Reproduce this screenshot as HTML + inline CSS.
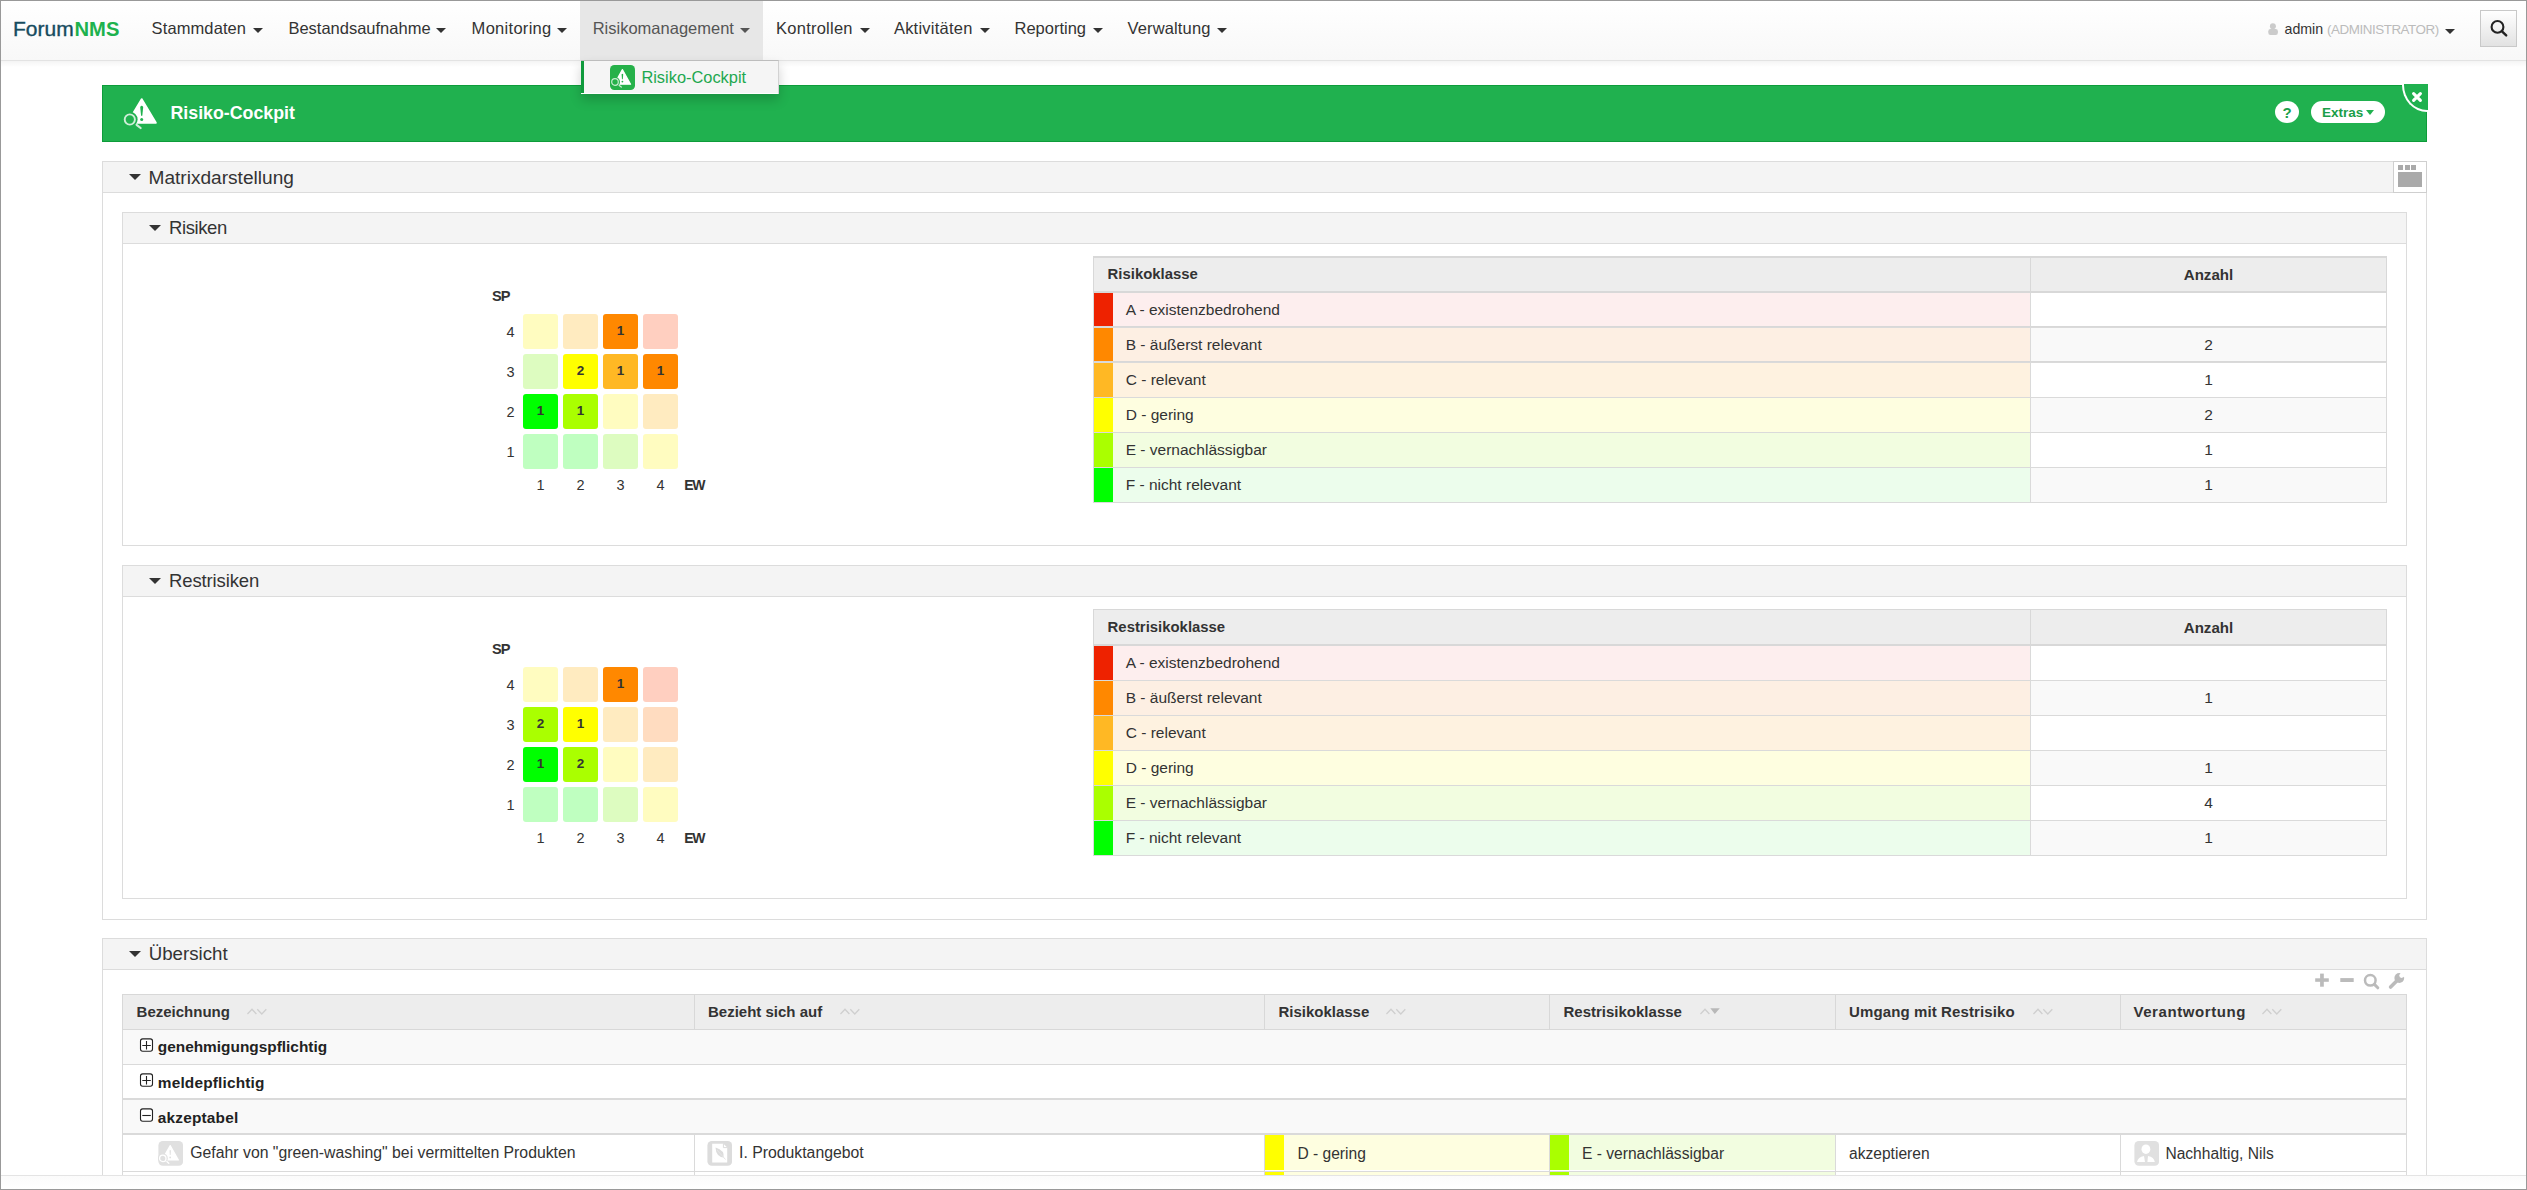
<!DOCTYPE html>
<html><head><meta charset="utf-8"><title>Risiko-Cockpit</title>
<style>
html,body{margin:0;padding:0;}
body{width:2527px;height:1190px;overflow:hidden;position:relative;background:#fff;font-family:"Liberation Sans",sans-serif;}
.a{position:absolute;}
.t{position:absolute;white-space:nowrap;line-height:1;}
</style></head><body>
<div class="a" style="left:1px;top:1px;width:2525px;height:59px;background:linear-gradient(#ffffff,#f8f8f8);"></div>
<div class="a" style="left:1px;top:60px;width:2525px;height:1px;background:#e3e3e3;"></div>
<div class="a" style="left:1px;top:61px;width:2525px;height:6px;background:linear-gradient(rgba(0,0,0,0.045),rgba(0,0,0,0));"></div>
<div class="a" style="left:580px;top:1px;width:183px;height:59px;background:#e7e7e7;"></div>
<div class="t" style="left:13px;top:18.22px;font-size:21px;color:#164b5e;font-weight:400;-webkit-text-stroke:0.35px #164b5e;">Forum</div>
<div class="t" style="left:74.5px;top:18.90px;font-size:20.2px;color:#1eb24e;font-weight:700;">NMS</div>
<div class="t" style="left:151.6px;top:19.83px;font-size:16.5px;color:#333;font-weight:400;letter-spacing:0.1px;">Stammdaten</div>
<div class="a" style="left:253.3px;top:27.5px;width:0;height:0;border-left:5.0px solid transparent;border-right:5.0px solid transparent;border-top:5px solid #333;"></div>
<div class="t" style="left:288.4px;top:19.83px;font-size:16.5px;color:#333;font-weight:400;letter-spacing:0px;">Bestandsaufnahme</div>
<div class="a" style="left:435.6px;top:27.5px;width:0;height:0;border-left:5.0px solid transparent;border-right:5.0px solid transparent;border-top:5px solid #333;"></div>
<div class="t" style="left:471.6px;top:19.83px;font-size:16.5px;color:#333;font-weight:400;letter-spacing:0.29px;">Monitoring</div>
<div class="a" style="left:556.9px;top:27.5px;width:0;height:0;border-left:5.0px solid transparent;border-right:5.0px solid transparent;border-top:5px solid #333;"></div>
<div class="t" style="left:592.7px;top:19.83px;font-size:16.5px;color:#555;font-weight:400;letter-spacing:0px;">Risikomanagement</div>
<div class="a" style="left:739.9px;top:27.5px;width:0;height:0;border-left:5.0px solid transparent;border-right:5.0px solid transparent;border-top:5px solid #555;"></div>
<div class="t" style="left:776.1px;top:19.83px;font-size:16.5px;color:#333;font-weight:400;letter-spacing:0.23px;">Kontrollen</div>
<div class="a" style="left:859.7px;top:27.5px;width:0;height:0;border-left:5.0px solid transparent;border-right:5.0px solid transparent;border-top:5px solid #333;"></div>
<div class="t" style="left:893.9px;top:19.83px;font-size:16.5px;color:#333;font-weight:400;letter-spacing:0.23px;">Aktivitäten</div>
<div class="a" style="left:979.5px;top:27.5px;width:0;height:0;border-left:5.0px solid transparent;border-right:5.0px solid transparent;border-top:5px solid #333;"></div>
<div class="t" style="left:1014.5px;top:19.83px;font-size:16.5px;color:#333;font-weight:400;letter-spacing:0px;">Reporting</div>
<div class="a" style="left:1092.5px;top:27.5px;width:0;height:0;border-left:5.0px solid transparent;border-right:5.0px solid transparent;border-top:5px solid #333;"></div>
<div class="t" style="left:1127.5px;top:19.83px;font-size:16.5px;color:#333;font-weight:400;letter-spacing:0.14px;">Verwaltung</div>
<div class="a" style="left:1216.5px;top:27.5px;width:0;height:0;border-left:5.0px solid transparent;border-right:5.0px solid transparent;border-top:5px solid #333;"></div>
<svg class="a" style="left:2267px;top:23px" width="12" height="13" viewBox="0 0 12 13"><circle cx="5.9" cy="3.3" r="3" fill="#cbcbcb"/><rect x="1.3" y="6.1" width="9.6" height="5.8" rx="2.2" fill="#cbcbcb"/></svg>
<div class="t" style="left:2284.5px;top:21.98px;font-size:14.2px;color:#333;font-weight:400;">admin</div>
<div class="t" style="left:2327px;top:22.66px;font-size:13.4px;color:#bbb;font-weight:400;letter-spacing:-0.45px;">(ADMINISTRATOR)</div>
<div class="a" style="left:2445px;top:28.5px;width:0;height:0;border-left:5.0px solid transparent;border-right:5.0px solid transparent;border-top:5px solid #333;"></div>
<div class="a" style="left:2480px;top:10px;width:37px;height:37px;box-sizing:border-box;border:1px solid #c9c9c9;background:linear-gradient(#ffffff,#e2e2e2);"></div>
<svg class="a" style="left:2487px;top:17px" width="22" height="22" viewBox="0 0 22 22"><circle cx="10.5" cy="9.9" r="5.9" fill="none" stroke="#222" stroke-width="2.1"/><path d="M15 14.3 L19.2 18.4" stroke="#222" stroke-width="2.4" stroke-linecap="round"/></svg>
<div class="a" style="left:102px;top:85px;width:2325px;height:57px;box-sizing:border-box;background:#20b14f;border:1px solid #0d9c3a;"></div>
<svg class="a" style="left:118px;top:92px" width="44" height="44" viewBox="0 0 44 44"><path d="M23.7 7.2 L37.8 30.8 L9.6 30.8 Z" fill="#fff" stroke="#fff" stroke-width="2" stroke-linejoin="round"/><path d="M22.2 15 Q23.7 12.6 25.2 15 L24.3 23.8 L23.1 23.8 Z" fill="#20b14f"/><circle cx="23.7" cy="27.4" r="1.5" fill="#20b14f"/><circle cx="11.8" cy="27.5" r="7.8" fill="#20b14f"/><circle cx="11.8" cy="27.5" r="5.1" fill="none" stroke="#cfeed8" stroke-width="1.9"/><path d="M18.6 32.8 L22.6 36" stroke="#cfeed8" stroke-width="2.2" stroke-linecap="round"/></svg>
<div class="t" style="left:170.5px;top:104.93px;font-size:17.8px;color:#fff;font-weight:700;">Risiko-Cockpit</div>
<div class="a" style="left:2275px;top:101px;width:24px;height:22px;background:#fff;border-radius:50%;"></div>
<div class="t" style="left:2275.0px;width:24px;text-align:center;top:104.80px;font-size:15px;color:#1a9e48;font-weight:700;">?</div>
<div class="a" style="left:2311px;top:101px;width:74px;height:22px;background:#fff;border-radius:11px;"></div>
<div class="t" style="left:2322px;top:105.57px;font-size:13.5px;color:#1a9e48;font-weight:700;">Extras</div>
<div class="a" style="left:2366px;top:109.5px;width:0;height:0;border-left:4.5px solid transparent;border-right:4.5px solid transparent;border-top:5px solid #20b14f;"></div>
<div class="a" style="left:2402px;top:84px;width:26px;height:28px;box-sizing:border-box;background:#20b14f;border-left:2px solid #fff;border-bottom:2px solid #fff;border-bottom-left-radius:25px 27px;"></div>
<svg class="a" style="left:2411px;top:91px" width="12" height="12" viewBox="0 0 12 12"><path d="M2.6 2.6 L9.4 9.4 M9.4 2.6 L2.6 9.4" stroke="#fff" stroke-width="3.1" stroke-linecap="round"/></svg>
<div class="a" style="left:102px;top:161px;width:2325px;height:759px;box-sizing:border-box;border:1px solid #dcdcdc;background:#fff;"></div>
<div class="a" style="left:102px;top:161px;width:2325px;height:32px;box-sizing:border-box;background:#f4f4f4;border:1px solid #dcdcdc;"></div>
<div class="a" style="left:128.5px;top:173.8px;width:0;height:0;border-left:6.0px solid transparent;border-right:6.0px solid transparent;border-top:6.5px solid #333;"></div>
<div class="t" style="left:148.5px;top:167.83px;font-size:19.1px;color:#333;font-weight:400;letter-spacing:0px;">Matrixdarstellung</div>
<div class="a" style="left:2393px;top:161px;width:34px;height:32px;box-sizing:border-box;border:1px solid #cfcfcf;background:#fff;"></div>
<div class="a" style="left:2398px;top:165px;width:5px;height:4.5px;background:#aaa;"></div>
<div class="a" style="left:2404.5px;top:165px;width:5px;height:4.5px;background:#aaa;"></div>
<div class="a" style="left:2411px;top:165px;width:5px;height:4.5px;background:#aaa;"></div>
<div class="a" style="left:2398px;top:171.5px;width:24px;height:15.5px;background:#aaa;"></div>
<div class="a" style="left:122px;top:212px;width:2285px;height:334px;box-sizing:border-box;border:1px solid #dcdcdc;background:#fff;"></div>
<div class="a" style="left:122px;top:212px;width:2285px;height:32px;box-sizing:border-box;background:#f4f4f4;border:1px solid #dcdcdc;"></div>
<div class="a" style="left:149px;top:224.8px;width:0;height:0;border-left:6.0px solid transparent;border-right:6.0px solid transparent;border-top:6.5px solid #333;"></div>
<div class="t" style="left:169px;top:219.34px;font-size:18.5px;color:#333;font-weight:400;letter-spacing:-0.4px;">Risiken</div>
<div class="t" style="left:492px;top:288.64px;font-size:14.6px;color:#333;font-weight:700;letter-spacing:-0.9px;">SP</div>
<div class="t" style="left:484.5px;width:30px;text-align:right;top:325.03px;font-size:14.5px;color:#333;font-weight:400;">4</div>
<div class="a" style="left:523px;top:314px;width:35px;height:35px;background:#fffcc0;border-radius:3px;"></div>
<div class="a" style="left:563px;top:314px;width:35px;height:35px;background:#ffebc0;border-radius:3px;"></div>
<div class="a" style="left:603px;top:314px;width:35px;height:35px;background:#ff8800;border-radius:3px;"></div>
<div class="t" style="left:603.0px;width:35px;text-align:center;top:324.37px;font-size:13.5px;color:#333;font-weight:700;">1</div>
<div class="a" style="left:643px;top:314px;width:35px;height:35px;background:#ffcfc0;border-radius:3px;"></div>
<div class="t" style="left:484.5px;width:30px;text-align:right;top:365.03px;font-size:14.5px;color:#333;font-weight:400;">3</div>
<div class="a" style="left:523px;top:354px;width:35px;height:35px;background:#ddfcc0;border-radius:3px;"></div>
<div class="a" style="left:563px;top:354px;width:35px;height:35px;background:#ffff00;border-radius:3px;"></div>
<div class="t" style="left:563.0px;width:35px;text-align:center;top:364.37px;font-size:13.5px;color:#333;font-weight:700;">2</div>
<div class="a" style="left:603px;top:354px;width:35px;height:35px;background:#ffb824;border-radius:3px;"></div>
<div class="t" style="left:603.0px;width:35px;text-align:center;top:364.37px;font-size:13.5px;color:#333;font-weight:700;">1</div>
<div class="a" style="left:643px;top:354px;width:35px;height:35px;background:#ff8800;border-radius:3px;"></div>
<div class="t" style="left:643.0px;width:35px;text-align:center;top:364.37px;font-size:13.5px;color:#333;font-weight:700;">1</div>
<div class="t" style="left:484.5px;width:30px;text-align:right;top:405.03px;font-size:14.5px;color:#333;font-weight:400;">2</div>
<div class="a" style="left:523px;top:394px;width:35px;height:35px;background:#00ff00;border-radius:3px;"></div>
<div class="t" style="left:523.0px;width:35px;text-align:center;top:404.37px;font-size:13.5px;color:#333;font-weight:700;">1</div>
<div class="a" style="left:563px;top:394px;width:35px;height:35px;background:#aaff00;border-radius:3px;"></div>
<div class="t" style="left:563.0px;width:35px;text-align:center;top:404.37px;font-size:13.5px;color:#333;font-weight:700;">1</div>
<div class="a" style="left:603px;top:394px;width:35px;height:35px;background:#fffcc0;border-radius:3px;"></div>
<div class="a" style="left:643px;top:394px;width:35px;height:35px;background:#ffebc0;border-radius:3px;"></div>
<div class="t" style="left:484.5px;width:30px;text-align:right;top:445.03px;font-size:14.5px;color:#333;font-weight:400;">1</div>
<div class="a" style="left:523px;top:434px;width:35px;height:35px;background:#bfffc0;border-radius:3px;"></div>
<div class="a" style="left:563px;top:434px;width:35px;height:35px;background:#bfffc0;border-radius:3px;"></div>
<div class="a" style="left:603px;top:434px;width:35px;height:35px;background:#ddfcc0;border-radius:3px;"></div>
<div class="a" style="left:643px;top:434px;width:35px;height:35px;background:#fffcc0;border-radius:3px;"></div>
<div class="t" style="left:525.5px;width:30px;text-align:center;top:477.73px;font-size:14.5px;color:#333;font-weight:400;">1</div>
<div class="t" style="left:565.5px;width:30px;text-align:center;top:477.73px;font-size:14.5px;color:#333;font-weight:400;">2</div>
<div class="t" style="left:605.5px;width:30px;text-align:center;top:477.73px;font-size:14.5px;color:#333;font-weight:400;">3</div>
<div class="t" style="left:645.5px;width:30px;text-align:center;top:477.73px;font-size:14.5px;color:#333;font-weight:400;">4</div>
<div class="t" style="left:684.2px;top:478.15px;font-size:14px;color:#333;font-weight:700;letter-spacing:-1.2px;">EW</div>
<div class="a" style="left:1093px;top:256px;width:1294px;height:37px;box-sizing:border-box;background:#ededed;border:1px solid #d8d8d8;border-top-width:2px;border-bottom-width:2px;"></div>
<div class="a" style="left:2030px;top:256px;width:1px;height:37px;background:#d8d8d8;"></div>
<div class="t" style="left:1107.6px;top:267.39px;font-size:14.9px;color:#333;font-weight:700;">Risikoklasse</div>
<div class="t" style="left:2148.5px;width:120px;text-align:center;top:267.22px;font-size:15.1px;color:#333;font-weight:700;">Anzahl</div>
<div class="a" style="left:1093px;top:293px;width:1294px;height:35px;box-sizing:border-box;border:1px solid #dadada;border-top:none;background:#fff;"></div>
<div class="a" style="left:1094px;top:293px;width:936px;height:34px;background:#fdeeee;"></div>
<div class="a" style="left:1094px;top:293px;width:19px;height:34px;background:#ee2200;"></div>
<div class="a" style="left:2030px;top:293px;width:1px;height:35px;background:#dadada;"></div>
<div class="t" style="left:1125.7px;top:301.58px;font-size:15.5px;color:#333;font-weight:400;">A - existenzbedrohend</div>
<div class="a" style="left:1093px;top:326px;width:1294px;height:1px;background:#d8d8d8;"></div>
<div class="a" style="left:1093px;top:328px;width:1294px;height:35px;box-sizing:border-box;border:1px solid #dadada;border-top:none;background:#f9f9f9;"></div>
<div class="a" style="left:1094px;top:328px;width:936px;height:34px;background:#fdefe3;"></div>
<div class="a" style="left:1094px;top:328px;width:19px;height:34px;background:#ff8800;"></div>
<div class="a" style="left:2030px;top:328px;width:1px;height:35px;background:#dadada;"></div>
<div class="t" style="left:1125.7px;top:336.58px;font-size:15.5px;color:#333;font-weight:400;">B - äußerst relevant</div>
<div class="t" style="left:2178.5px;width:60px;text-align:center;top:336.58px;font-size:15.5px;color:#333;font-weight:400;">2</div>
<div class="a" style="left:1093px;top:361px;width:1294px;height:1px;background:#d8d8d8;"></div>
<div class="a" style="left:1093px;top:363px;width:1294px;height:35px;box-sizing:border-box;border:1px solid #dadada;border-top:none;background:#fff;"></div>
<div class="a" style="left:1094px;top:363px;width:936px;height:34px;background:#fef2e0;"></div>
<div class="a" style="left:1094px;top:363px;width:19px;height:34px;background:#ffb824;"></div>
<div class="a" style="left:2030px;top:363px;width:1px;height:35px;background:#dadada;"></div>
<div class="t" style="left:1125.7px;top:371.58px;font-size:15.5px;color:#333;font-weight:400;">C - relevant</div>
<div class="t" style="left:2178.5px;width:60px;text-align:center;top:371.58px;font-size:15.5px;color:#333;font-weight:400;">1</div>
<div class="a" style="left:1093px;top:398px;width:1294px;height:35px;box-sizing:border-box;border:1px solid #dadada;border-top:none;background:#f9f9f9;"></div>
<div class="a" style="left:1094px;top:398px;width:936px;height:34px;background:#fefee0;"></div>
<div class="a" style="left:1094px;top:398px;width:19px;height:34px;background:#ffff00;"></div>
<div class="a" style="left:2030px;top:398px;width:1px;height:35px;background:#dadada;"></div>
<div class="t" style="left:1125.7px;top:406.58px;font-size:15.5px;color:#333;font-weight:400;">D - gering</div>
<div class="t" style="left:2178.5px;width:60px;text-align:center;top:406.58px;font-size:15.5px;color:#333;font-weight:400;">2</div>
<div class="a" style="left:1093px;top:433px;width:1294px;height:35px;box-sizing:border-box;border:1px solid #dadada;border-top:none;background:#fff;"></div>
<div class="a" style="left:1094px;top:433px;width:936px;height:34px;background:#f2fde0;"></div>
<div class="a" style="left:1094px;top:433px;width:19px;height:34px;background:#aaff00;"></div>
<div class="a" style="left:2030px;top:433px;width:1px;height:35px;background:#dadada;"></div>
<div class="t" style="left:1125.7px;top:441.58px;font-size:15.5px;color:#333;font-weight:400;">E - vernachlässigbar</div>
<div class="t" style="left:2178.5px;width:60px;text-align:center;top:441.58px;font-size:15.5px;color:#333;font-weight:400;">1</div>
<div class="a" style="left:1093px;top:468px;width:1294px;height:35px;box-sizing:border-box;border:1px solid #dadada;border-top:none;background:#f9f9f9;"></div>
<div class="a" style="left:1094px;top:468px;width:936px;height:34px;background:#ecfdec;"></div>
<div class="a" style="left:1094px;top:468px;width:19px;height:34px;background:#00ff00;"></div>
<div class="a" style="left:2030px;top:468px;width:1px;height:35px;background:#dadada;"></div>
<div class="t" style="left:1125.7px;top:476.58px;font-size:15.5px;color:#333;font-weight:400;">F - nicht relevant</div>
<div class="t" style="left:2178.5px;width:60px;text-align:center;top:476.58px;font-size:15.5px;color:#333;font-weight:400;">1</div>
<div class="a" style="left:122px;top:565px;width:2285px;height:334px;box-sizing:border-box;border:1px solid #dcdcdc;background:#fff;"></div>
<div class="a" style="left:122px;top:565px;width:2285px;height:32px;box-sizing:border-box;background:#f4f4f4;border:1px solid #dcdcdc;"></div>
<div class="a" style="left:149px;top:577.8px;width:0;height:0;border-left:6.0px solid transparent;border-right:6.0px solid transparent;border-top:6.5px solid #333;"></div>
<div class="t" style="left:169px;top:572.34px;font-size:18.5px;color:#333;font-weight:400;letter-spacing:-0.13px;">Restrisiken</div>
<div class="t" style="left:492px;top:641.64px;font-size:14.6px;color:#333;font-weight:700;letter-spacing:-0.9px;">SP</div>
<div class="t" style="left:484.5px;width:30px;text-align:right;top:678.03px;font-size:14.5px;color:#333;font-weight:400;">4</div>
<div class="a" style="left:523px;top:667px;width:35px;height:35px;background:#fffcc0;border-radius:3px;"></div>
<div class="a" style="left:563px;top:667px;width:35px;height:35px;background:#ffebc0;border-radius:3px;"></div>
<div class="a" style="left:603px;top:667px;width:35px;height:35px;background:#ff8800;border-radius:3px;"></div>
<div class="t" style="left:603.0px;width:35px;text-align:center;top:677.37px;font-size:13.5px;color:#333;font-weight:700;">1</div>
<div class="a" style="left:643px;top:667px;width:35px;height:35px;background:#ffcfc0;border-radius:3px;"></div>
<div class="t" style="left:484.5px;width:30px;text-align:right;top:718.03px;font-size:14.5px;color:#333;font-weight:400;">3</div>
<div class="a" style="left:523px;top:707px;width:35px;height:35px;background:#aaff00;border-radius:3px;"></div>
<div class="t" style="left:523.0px;width:35px;text-align:center;top:717.37px;font-size:13.5px;color:#333;font-weight:700;">2</div>
<div class="a" style="left:563px;top:707px;width:35px;height:35px;background:#ffff00;border-radius:3px;"></div>
<div class="t" style="left:563.0px;width:35px;text-align:center;top:717.37px;font-size:13.5px;color:#333;font-weight:700;">1</div>
<div class="a" style="left:603px;top:707px;width:35px;height:35px;background:#ffebc0;border-radius:3px;"></div>
<div class="a" style="left:643px;top:707px;width:35px;height:35px;background:#ffdcc0;border-radius:3px;"></div>
<div class="t" style="left:484.5px;width:30px;text-align:right;top:758.03px;font-size:14.5px;color:#333;font-weight:400;">2</div>
<div class="a" style="left:523px;top:747px;width:35px;height:35px;background:#00ff00;border-radius:3px;"></div>
<div class="t" style="left:523.0px;width:35px;text-align:center;top:757.37px;font-size:13.5px;color:#333;font-weight:700;">1</div>
<div class="a" style="left:563px;top:747px;width:35px;height:35px;background:#aaff00;border-radius:3px;"></div>
<div class="t" style="left:563.0px;width:35px;text-align:center;top:757.37px;font-size:13.5px;color:#333;font-weight:700;">2</div>
<div class="a" style="left:603px;top:747px;width:35px;height:35px;background:#fffcc0;border-radius:3px;"></div>
<div class="a" style="left:643px;top:747px;width:35px;height:35px;background:#ffebc0;border-radius:3px;"></div>
<div class="t" style="left:484.5px;width:30px;text-align:right;top:798.03px;font-size:14.5px;color:#333;font-weight:400;">1</div>
<div class="a" style="left:523px;top:787px;width:35px;height:35px;background:#bfffc0;border-radius:3px;"></div>
<div class="a" style="left:563px;top:787px;width:35px;height:35px;background:#bfffc0;border-radius:3px;"></div>
<div class="a" style="left:603px;top:787px;width:35px;height:35px;background:#ddfcc0;border-radius:3px;"></div>
<div class="a" style="left:643px;top:787px;width:35px;height:35px;background:#fffcc0;border-radius:3px;"></div>
<div class="t" style="left:525.5px;width:30px;text-align:center;top:830.73px;font-size:14.5px;color:#333;font-weight:400;">1</div>
<div class="t" style="left:565.5px;width:30px;text-align:center;top:830.73px;font-size:14.5px;color:#333;font-weight:400;">2</div>
<div class="t" style="left:605.5px;width:30px;text-align:center;top:830.73px;font-size:14.5px;color:#333;font-weight:400;">3</div>
<div class="t" style="left:645.5px;width:30px;text-align:center;top:830.73px;font-size:14.5px;color:#333;font-weight:400;">4</div>
<div class="t" style="left:684.2px;top:831.15px;font-size:14px;color:#333;font-weight:700;letter-spacing:-1.2px;">EW</div>
<div class="a" style="left:1093px;top:609px;width:1294px;height:37px;box-sizing:border-box;background:#ededed;border:1px solid #d8d8d8;border-top-width:1px;border-bottom-width:2px;"></div>
<div class="a" style="left:2030px;top:609px;width:1px;height:37px;background:#d8d8d8;"></div>
<div class="t" style="left:1107.6px;top:620.39px;font-size:14.9px;color:#333;font-weight:700;">Restrisikoklasse</div>
<div class="t" style="left:2148.5px;width:120px;text-align:center;top:620.22px;font-size:15.1px;color:#333;font-weight:700;">Anzahl</div>
<div class="a" style="left:1093px;top:646px;width:1294px;height:35px;box-sizing:border-box;border:1px solid #dadada;border-top:none;background:#fff;"></div>
<div class="a" style="left:1094px;top:646px;width:936px;height:34px;background:#fdeeee;"></div>
<div class="a" style="left:1094px;top:646px;width:19px;height:34px;background:#ee2200;"></div>
<div class="a" style="left:2030px;top:646px;width:1px;height:35px;background:#dadada;"></div>
<div class="t" style="left:1125.7px;top:654.58px;font-size:15.5px;color:#333;font-weight:400;">A - existenzbedrohend</div>
<div class="a" style="left:1093px;top:681px;width:1294px;height:35px;box-sizing:border-box;border:1px solid #dadada;border-top:none;background:#f9f9f9;"></div>
<div class="a" style="left:1094px;top:681px;width:936px;height:34px;background:#fdefe3;"></div>
<div class="a" style="left:1094px;top:681px;width:19px;height:34px;background:#ff8800;"></div>
<div class="a" style="left:2030px;top:681px;width:1px;height:35px;background:#dadada;"></div>
<div class="t" style="left:1125.7px;top:689.58px;font-size:15.5px;color:#333;font-weight:400;">B - äußerst relevant</div>
<div class="t" style="left:2178.5px;width:60px;text-align:center;top:689.58px;font-size:15.5px;color:#333;font-weight:400;">1</div>
<div class="a" style="left:1093px;top:716px;width:1294px;height:35px;box-sizing:border-box;border:1px solid #dadada;border-top:none;background:#fff;"></div>
<div class="a" style="left:1094px;top:716px;width:936px;height:34px;background:#fef2e0;"></div>
<div class="a" style="left:1094px;top:716px;width:19px;height:34px;background:#ffb824;"></div>
<div class="a" style="left:2030px;top:716px;width:1px;height:35px;background:#dadada;"></div>
<div class="t" style="left:1125.7px;top:724.58px;font-size:15.5px;color:#333;font-weight:400;">C - relevant</div>
<div class="a" style="left:1093px;top:751px;width:1294px;height:35px;box-sizing:border-box;border:1px solid #dadada;border-top:none;background:#f9f9f9;"></div>
<div class="a" style="left:1094px;top:751px;width:936px;height:34px;background:#fefee0;"></div>
<div class="a" style="left:1094px;top:751px;width:19px;height:34px;background:#ffff00;"></div>
<div class="a" style="left:2030px;top:751px;width:1px;height:35px;background:#dadada;"></div>
<div class="t" style="left:1125.7px;top:759.58px;font-size:15.5px;color:#333;font-weight:400;">D - gering</div>
<div class="t" style="left:2178.5px;width:60px;text-align:center;top:759.58px;font-size:15.5px;color:#333;font-weight:400;">1</div>
<div class="a" style="left:1093px;top:786px;width:1294px;height:35px;box-sizing:border-box;border:1px solid #dadada;border-top:none;background:#fff;"></div>
<div class="a" style="left:1094px;top:786px;width:936px;height:34px;background:#f2fde0;"></div>
<div class="a" style="left:1094px;top:786px;width:19px;height:34px;background:#aaff00;"></div>
<div class="a" style="left:2030px;top:786px;width:1px;height:35px;background:#dadada;"></div>
<div class="t" style="left:1125.7px;top:794.58px;font-size:15.5px;color:#333;font-weight:400;">E - vernachlässigbar</div>
<div class="t" style="left:2178.5px;width:60px;text-align:center;top:794.58px;font-size:15.5px;color:#333;font-weight:400;">4</div>
<div class="a" style="left:1093px;top:821px;width:1294px;height:35px;box-sizing:border-box;border:1px solid #dadada;border-top:none;background:#f9f9f9;"></div>
<div class="a" style="left:1094px;top:821px;width:936px;height:34px;background:#ecfdec;"></div>
<div class="a" style="left:1094px;top:821px;width:19px;height:34px;background:#00ff00;"></div>
<div class="a" style="left:2030px;top:821px;width:1px;height:35px;background:#dadada;"></div>
<div class="t" style="left:1125.7px;top:829.58px;font-size:15.5px;color:#333;font-weight:400;">F - nicht relevant</div>
<div class="t" style="left:2178.5px;width:60px;text-align:center;top:829.58px;font-size:15.5px;color:#333;font-weight:400;">1</div>
<div class="a" style="left:102px;top:938px;width:2325px;height:300px;box-sizing:border-box;border:1px solid #dcdcdc;background:#fff;"></div>
<div class="a" style="left:102px;top:938px;width:2325px;height:32px;box-sizing:border-box;background:#f4f4f4;border:1px solid #dcdcdc;"></div>
<div class="a" style="left:128.7px;top:950.8px;width:0;height:0;border-left:6.0px solid transparent;border-right:6.0px solid transparent;border-top:6.5px solid #333;"></div>
<div class="t" style="left:148.7px;top:945.17px;font-size:18.7px;color:#333;font-weight:400;letter-spacing:0px;">Übersicht</div>
<svg class="a" style="left:2308px;top:968px" width="104" height="26" viewBox="0 0 104 26"><rect x="7.2" y="10.3" width="13.6" height="3.5" fill="#bbb"/><rect x="12.1" y="5.6" width="3.7" height="13.1" fill="#bbb"/><rect x="32.3" y="10.1" width="13.4" height="3.9" fill="#bbb"/><circle cx="62.3" cy="12.3" r="5.3" fill="none" stroke="#bbb" stroke-width="2.5"/><path d="M66.4 16.4 L69.8 19.8" stroke="#bbb" stroke-width="3" stroke-linecap="round"/><path d="M82.6 19 L88.6 13" stroke="#bbb" stroke-width="3.6" stroke-linecap="round"/><circle cx="91.3" cy="10" r="4.9" fill="#bbb"/><circle cx="93.6" cy="7.6" r="2.3" fill="#fff"/><path d="M93.6 7.6 L97 4.2" stroke="#fff" stroke-width="4.6"/></svg>
<div class="a" style="left:122px;top:994px;width:2285px;height:36px;box-sizing:border-box;background:#ededed;border:1px solid #d8d8d8;"></div>
<div class="a" style="left:694px;top:994px;width:1px;height:36px;background:#d8d8d8;"></div>
<div class="a" style="left:1264px;top:994px;width:1px;height:36px;background:#d8d8d8;"></div>
<div class="a" style="left:1549px;top:994px;width:1px;height:36px;background:#d8d8d8;"></div>
<div class="a" style="left:1835px;top:994px;width:1px;height:36px;background:#d8d8d8;"></div>
<div class="a" style="left:2120px;top:994px;width:1px;height:36px;background:#d8d8d8;"></div>
<div class="t" style="left:136.6px;top:1004.30px;font-size:15px;color:#333;font-weight:700;letter-spacing:0px;">Bezeichnung</div>
<svg class="a" style="left:247px;top:1000px" width="22" height="20" viewBox="0 0 22 20"><path d="M0.4 14 L5 9.2 L9.4 14" fill="none" stroke="#cfcfcf" stroke-width="1.3"/><path d="M10.3 9.2 L14.8 14 L19.3 9.2" fill="none" stroke="#cfcfcf" stroke-width="1.3"/></svg>
<div class="t" style="left:708px;top:1004.30px;font-size:15px;color:#333;font-weight:700;letter-spacing:0px;">Bezieht sich auf</div>
<svg class="a" style="left:840.4px;top:1000px" width="22" height="20" viewBox="0 0 22 20"><path d="M0.4 14 L5 9.2 L9.4 14" fill="none" stroke="#cfcfcf" stroke-width="1.3"/><path d="M10.3 9.2 L14.8 14 L19.3 9.2" fill="none" stroke="#cfcfcf" stroke-width="1.3"/></svg>
<div class="t" style="left:1278.4px;top:1004.30px;font-size:15px;color:#333;font-weight:700;letter-spacing:0px;">Risikoklasse</div>
<svg class="a" style="left:1385.7px;top:1000px" width="22" height="20" viewBox="0 0 22 20"><path d="M0.4 14 L5 9.2 L9.4 14" fill="none" stroke="#cfcfcf" stroke-width="1.3"/><path d="M10.3 9.2 L14.8 14 L19.3 9.2" fill="none" stroke="#cfcfcf" stroke-width="1.3"/></svg>
<div class="t" style="left:1563.5px;top:1004.30px;font-size:15px;color:#333;font-weight:700;letter-spacing:0px;">Restrisikoklasse</div>
<svg class="a" style="left:1700.4px;top:1000px" width="22" height="20" viewBox="0 0 22 20"><path d="M0.4 14 L5 9.2 L9.4 14" fill="none" stroke="#cfcfcf" stroke-width="1.3"/><path d="M10.3 8.3 L19.8 8.3 L14.8 13.9 Z" fill="#b8b8b8"/></svg>
<div class="t" style="left:1849px;top:1004.30px;font-size:15px;color:#333;font-weight:700;letter-spacing:0.115px;">Umgang mit Restrisiko</div>
<svg class="a" style="left:2032.5px;top:1000px" width="22" height="20" viewBox="0 0 22 20"><path d="M0.4 14 L5 9.2 L9.4 14" fill="none" stroke="#cfcfcf" stroke-width="1.3"/><path d="M10.3 9.2 L14.8 14 L19.3 9.2" fill="none" stroke="#cfcfcf" stroke-width="1.3"/></svg>
<div class="t" style="left:2133.4px;top:1004.30px;font-size:15px;color:#333;font-weight:700;letter-spacing:0.58px;">Verantwortung</div>
<svg class="a" style="left:2261.6px;top:1000px" width="22" height="20" viewBox="0 0 22 20"><path d="M0.4 14 L5 9.2 L9.4 14" fill="none" stroke="#cfcfcf" stroke-width="1.3"/><path d="M10.3 9.2 L14.8 14 L19.3 9.2" fill="none" stroke="#cfcfcf" stroke-width="1.3"/></svg>
<div class="a" style="left:122px;top:1030px;width:2285px;height:35px;box-sizing:border-box;background:#f9f9f9;border-left:1px solid #dadada;border-right:1px solid #dadada;border-bottom:1px solid #dadada;"></div>
<svg class="a" style="left:136px;top:1034.0px" width="22" height="22" viewBox="0 0 22 22"><rect x="4.5" y="4.9" width="12" height="12.3" rx="2.2" fill="#fff" stroke="#222" stroke-width="1.1"/><path d="M6.3 11.5 H14.8 M10.5 7 V15.5" stroke="#222" stroke-width="1.1"/></svg>
<div class="t" style="left:157.8px;top:1039.46px;font-size:15.4px;color:#222;font-weight:700;letter-spacing:0px;">genehmigungspflichtig</div>
<div class="a" style="left:122px;top:1065px;width:2285px;height:35px;box-sizing:border-box;background:#fff;border-left:1px solid #dadada;border-right:1px solid #dadada;border-bottom:2px solid #dadada;"></div>
<svg class="a" style="left:136px;top:1069.0px" width="22" height="22" viewBox="0 0 22 22"><rect x="4.5" y="4.9" width="12" height="12.3" rx="2.2" fill="#fff" stroke="#222" stroke-width="1.1"/><path d="M6.3 11.5 H14.8 M10.5 7 V15.5" stroke="#222" stroke-width="1.1"/></svg>
<div class="t" style="left:157.8px;top:1074.56px;font-size:15.4px;color:#222;font-weight:700;letter-spacing:0.18px;">meldepflichtig</div>
<div class="a" style="left:122px;top:1100px;width:2285px;height:35px;box-sizing:border-box;background:#f9f9f9;border-left:1px solid #dadada;border-right:1px solid #dadada;border-bottom:2px solid #dadada;"></div>
<svg class="a" style="left:136px;top:1104.0px" width="22" height="22" viewBox="0 0 22 22"><rect x="4.5" y="4.9" width="12" height="12.3" rx="2.2" fill="#fff" stroke="#222" stroke-width="1.1"/><path d="M6.3 11.5 H14.8" stroke="#222" stroke-width="1.1"/></svg>
<div class="t" style="left:157.8px;top:1109.96px;font-size:15.4px;color:#222;font-weight:700;letter-spacing:0.19px;">akzeptabel</div>
<div class="a" style="left:122px;top:1135px;width:2285px;height:45px;box-sizing:border-box;background:#fff;border-left:1px solid #dadada;border-right:1px solid #dadada;"></div>
<div class="a" style="left:122px;top:1171px;width:2285px;height:1px;background:#dadada;"></div>
<div class="a" style="left:694px;top:1135px;width:1px;height:40px;background:#dadada;"></div>
<div class="a" style="left:1264px;top:1135px;width:1px;height:40px;background:#dadada;"></div>
<div class="a" style="left:1549px;top:1135px;width:1px;height:40px;background:#dadada;"></div>
<div class="a" style="left:1835px;top:1135px;width:1px;height:40px;background:#dadada;"></div>
<div class="a" style="left:2120px;top:1135px;width:1px;height:40px;background:#dadada;"></div>
<div class="a" style="left:1265px;top:1135px;width:284px;height:35px;background:#fefee0;"></div>
<div class="a" style="left:1265px;top:1135px;width:19px;height:35px;background:#ffff00;"></div>
<div class="a" style="left:1550px;top:1135px;width:285px;height:35px;background:#f2fde0;"></div>
<div class="a" style="left:1550px;top:1135px;width:19px;height:35px;background:#aaff00;"></div>
<div class="a" style="left:1265px;top:1172px;width:284px;height:3px;background:#fefee0;"></div>
<div class="a" style="left:1265px;top:1172px;width:19px;height:3px;background:#ffff00;"></div>
<div class="a" style="left:1550px;top:1172px;width:285px;height:3px;background:#f2fde0;"></div>
<div class="a" style="left:1550px;top:1172px;width:19px;height:3px;background:#aaff00;"></div>
<svg class="a" style="left:158px;top:1141px" width="25" height="25" viewBox="0 0 25 25"><rect x="0.4" y="0" width="24.7" height="24.7" rx="4.4" fill="#e0e0e0"/><path d="M12.2 4.6 L20.4 19 L4 19 Z" fill="#fff" stroke="#fff" stroke-width="1.2" stroke-linejoin="round"/><path d="M11.5 9.4 Q12.2 8.4 12.9 9.4 L12.6 14 L11.8 14 Z" fill="#e0e0e0"/><circle cx="12.2" cy="16.4" r="0.9" fill="#e0e0e0"/><circle cx="4.8" cy="17.4" r="5" fill="#e0e0e0"/><circle cx="4.8" cy="17.4" r="3.2" fill="none" stroke="#fff" stroke-width="1.3"/><path d="M8.8 20.6 L10.8 22.3" stroke="#fff" stroke-width="1.3" stroke-linecap="round"/></svg>
<div class="t" style="left:190.3px;top:1145.43px;font-size:15.8px;color:#333;font-weight:400;">Gefahr von "green-washing" bei vermittelten Produkten</div>
<svg class="a" style="left:707px;top:1141px" width="25" height="25" viewBox="0 0 25 25"><rect x="0.4" y="0" width="24.7" height="24.7" rx="4.4" fill="#dcdcdc"/><path d="M5.2 2.8 H16.4 L20.2 6.6 V21.6 H5.2 Z" fill="#fff"/><path d="M16.4 2.8 V6.6 H20.2" fill="none" stroke="#dcdcdc" stroke-width="1"/><path d="M8.5 6.5 Q9 15.5 16.5 16.5 Q18 9.5 8.5 6.5 Z" fill="#dcdcdc"/><path d="M10 9 L18.5 18.5" stroke="#e6e6e6" stroke-width="1"/></svg>
<div class="t" style="left:739px;top:1145.43px;font-size:15.8px;color:#333;font-weight:400;">I. Produktangebot</div>
<div class="t" style="left:1297.4px;top:1145.59px;font-size:15.6px;color:#333;font-weight:400;">D - gering</div>
<div class="t" style="left:1582px;top:1145.59px;font-size:15.6px;color:#333;font-weight:400;">E - vernachlässigbar</div>
<div class="t" style="left:1849px;top:1145.59px;font-size:15.6px;color:#333;font-weight:400;">akzeptieren</div>
<svg class="a" style="left:2134px;top:1141px" width="25" height="25" viewBox="0 0 25 25"><rect x="0.4" y="0" width="24.7" height="24.7" rx="4.4" fill="#e0e0e0"/><ellipse cx="11.9" cy="8.2" rx="4.4" ry="4.8" fill="#fff"/><path d="M3 21 Q4 16 10 15 L11 20.9 Z M20.8 21 Q20 16 14 15 L13.4 20.9 Z" fill="#fff"/></svg>
<div class="t" style="left:2165.4px;top:1145.59px;font-size:15.6px;color:#333;font-weight:400;">Nachhaltig, Nils</div>
<div class="a" style="left:1px;top:1175px;width:2525px;height:14px;background:linear-gradient(#fbfbfb,#fff);border-top:1px solid #e4e4e4;box-sizing:border-box;"></div>
<div class="a" style="left:581px;top:60px;width:198px;height:34px;box-sizing:border-box;background:#fff;border-top:1px solid #bdbdbd;border-right:1px solid #d2d2d2;box-shadow:0 6px 12px rgba(0,0,0,0.18);"></div>
<div class="a" style="left:581px;top:61px;width:197px;height:32px;box-sizing:border-box;background:#f5f5f5;border-left:3px solid #0f9a3c;"></div>
<svg class="a" style="left:610px;top:65px" width="25" height="25" viewBox="0 0 25 25"><rect x="0" y="0" width="25" height="25" rx="4.4" fill="#26b14a"/><path d="M12.4 4.6 L20.6 19.2 L4.2 19.2 Z" fill="#fff" stroke="#fff" stroke-width="1.2" stroke-linejoin="round"/><path d="M11.6 9.2 Q12.4 8.2 13.2 9.2 L12.8 14.2 L12 14.2 Z" fill="#26b14a"/><circle cx="12.4" cy="16.6" r="0.9" fill="#26b14a"/><circle cx="5" cy="17" r="5" fill="#26b14a"/><circle cx="5" cy="17" r="3.3" fill="none" stroke="#c9ecd2" stroke-width="1.2"/><path d="M9.2 20.4 L11.3 22" stroke="#c9ecd2" stroke-width="1.3" stroke-linecap="round"/></svg>
<div class="t" style="left:641.4px;top:69.12px;font-size:16.4px;color:#1ea84f;font-weight:400;">Risiko-Cockpit</div>
<div class="a" style="left:0px;top:0px;width:2527px;height:1190px;box-sizing:border-box;border:1px solid #999;z-index:50;"></div>
</body></html>
